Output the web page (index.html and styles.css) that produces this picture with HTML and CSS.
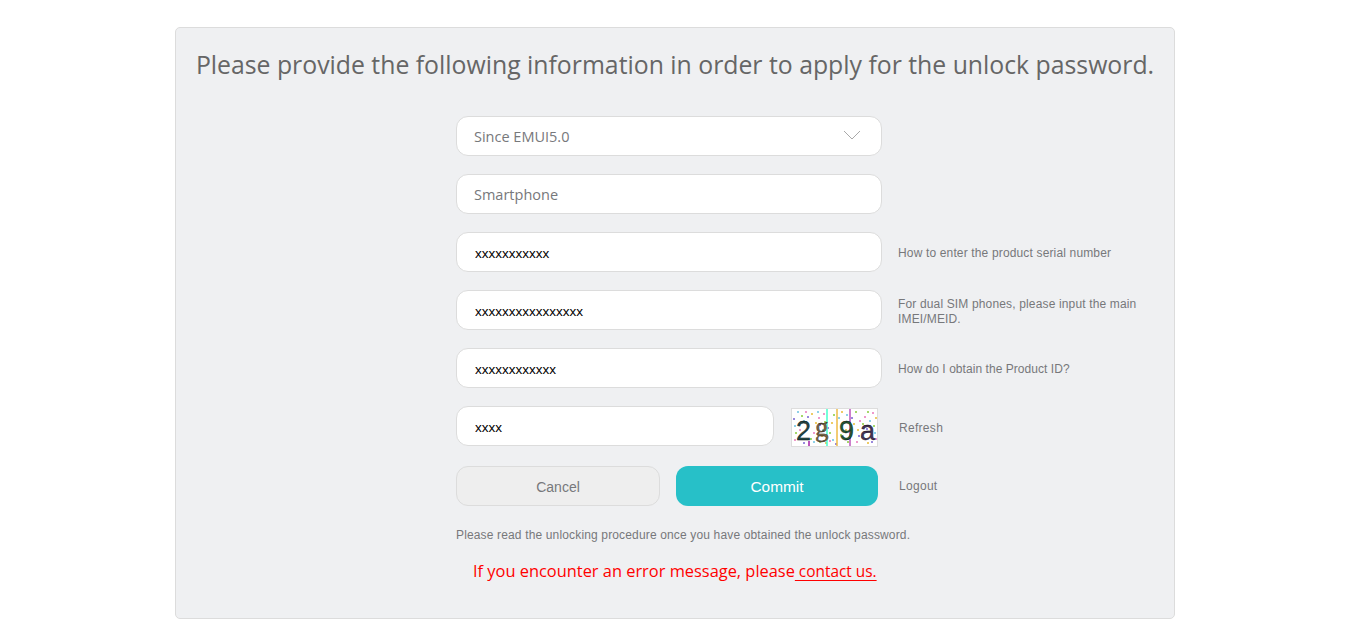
FILE: index.html
```html
<!DOCTYPE html>
<html lang="en">
<head>
  <meta charset="UTF-8" />
  <title>Apply for the unlock password</title>
  <link rel="stylesheet" href="styles.css">
</head>
<body>
  <div class="container">
    <h2>Please provide the following information in order to apply for the unlock password.</h2>

    <form class="unlock-form">
      <div class="row">
        <div class="field select">
          <span>Since EMUI5.0</span>
          <svg class="arrow" width="18" height="10" viewBox="0 0 18 10"><path d="M1 1l8 8 8-8" fill="none" stroke="#a9a9a9" stroke-width="1"/></svg>
        </div>
      </div>
      <div class="row">
        <input class="field soft" type="text" value="Smartphone" />
      </div>
      <div class="row">
        <input class="field" type="text" value="xxxxxxxxxxx" />
        <a class="hint">How to enter the product serial number</a>
      </div>
      <div class="row">
        <input class="field" type="text" value="xxxxxxxxxxxxxxxx" />
        <a class="hint two-line">For dual SIM phones, please input the main IMEI/MEID.</a>
      </div>
      <div class="row">
        <input class="field" type="text" value="xxxxxxxxxxxx" />
        <a class="hint short">How do I obtain the Product ID?</a>
      </div>
      <div class="row">
        <input class="field code" type="text" value="xxxx" />
        <svg class="captcha" width="87" height="39" viewBox="0 0 87 39">
          <rect x="0.5" y="0.5" width="86" height="38" fill="#fff" stroke="#ddd"/>
          <path fill="#8fd0e8" d="M6 3h2v2h-2zM26 3h2v2h-2zM47 9h2v2h-2zM70 28h2v2h-2zM22 33h2v2h-2zM3 17h2v2h-2zM55 6h2v2h-2zM78 12h2v2h-2zM12 12h2v2h-2zM41 31h2v2h-2zM31 21h2v2h-2zM58 29h2v2h-2zM83 24h2v2h-2zM9 26h2v2h-2z"/>
          <path fill="#ee99cc" d="M14 3h2v2h-2zM27 9h2v2h-2zM38 32h2v2h-2zM73 8h2v2h-2zM81 4h2v2h-2zM17 33h2v2h-2zM8 21h2v2h-2zM52 14h2v2h-2zM65 33h2v2h-2zM32 5h2v2h-2zM84 30h2v2h-2zM22 24h2v2h-2zM68 12h2v2h-2zM3 31h2v2h-2z"/>
          <path fill="#a6d86a" d="M4 24h2v2h-2zM33 13h2v2h-2zM64 3h2v2h-2zM56 33h2v2h-2zM82 17h2v2h-2zM19 30h2v2h-2zM42 6h2v2h-2zM71 15h2v2h-2zM10 7h2v2h-2zM49 26h2v2h-2zM28 33h2v2h-2zM76 3h2v2h-2zM38 24h2v2h-2z"/>
          <path fill="#eecc66" d="M20 5h2v2h-2zM30 27h2v2h-2zM62 15h2v2h-2zM76 34h2v2h-2zM6 30h2v2h-2zM40 14h2v2h-2zM84 9h2v2h-2zM24 14h2v2h-2zM54 21h2v2h-2zM34 34h2v2h-2zM66 21h2v2h-2zM50 3h2v2h-2z"/>
          <path fill="#9988dd" d="M16 8h2v2h-2zM36 19h2v2h-2zM60 9h2v2h-2zM75 20h2v2h-2zM12 34h2v2h-2zM44 35h2v2h-2zM2 10h2v2h-2zM67 27h2v2h-2zM28 16h2v2h-2zM80 33h2v2h-2z"/>
          <path d="M18 33v5" stroke="#b5b" stroke-width="2"/>
          <path d="M36 1v37" stroke="#4fc" stroke-width="1.5"/>
          <path d="M46 1v37" stroke="#eb4" stroke-width="1.5"/>
          <path d="M59 1v37" stroke="#b5b" stroke-width="1.5"/>
          <text class="glyph" x="5" y="32" fill="#244">2</text>
          <text class="glyph serif" x="24" y="28" fill="#764">g</text>
          <text class="glyph" x="48" y="32" fill="#253">9</text>
          <text class="glyph" x="69" y="32" fill="#435">a</text>
        </svg>
        <a class="link refresh">Refresh</a>
      </div>
      <div class="row actions">
        <button class="btn cancel" type="button">Cancel</button>
        <button class="btn commit" type="button">Commit</button>
        <a class="link logout">Logout</a>
      </div>
      <p class="note">Please read the unlocking procedure once you have obtained the unlock password.</p>
      <p class="error">If you encounter an error message, please<a> contact us.</a></p>
    </form>
  </div>
</body>
</html>
```

FILE: styles.css
```css
body {
  margin: 0;
  padding: 0;
  background: #fff;
  font-family: 'Liberation Sans', Arial, sans-serif;
}

.container {
  box-sizing: border-box;
  width: 1000px;
  height: 592px;
  margin: 27px 0 0 175px;
  background-color: #eff0f2;
  border: 1px solid #dcdcdc;
  border-radius: 5px;
}

h2 {
  margin: 0;
  padding-top: 19px;
  height: 88px;
  box-sizing: border-box;
  text-align: center;
  font-family: 'Open Sans', sans-serif;
  font-size: 24.8px;
  line-height: 34px;
  font-weight: 400;
  color: #666;
  white-space: nowrap;
}

.unlock-form {
  padding-left: 280px;
}

.row {
  display: flex;
  align-items: center;
  height: 40px;
  margin-bottom: 18px;
}

.field {
  box-sizing: border-box;
  width: 426px;
  height: 40px;
  flex: none;
  padding: 2px 17px 0 18px;
  background: #fff;
  border: 1px solid #dcdcdc;
  border-radius: 12px;
  font-family: 'Liberation Sans', Arial, sans-serif;
  font-size: 13.5px;
  color: #000;
  outline: none;
}

.select {
  display: flex;
  align-items: center;
  justify-content: space-between;
  padding: 0 20px 0 17px;
  font-family: 'Open Sans', sans-serif;
  font-size: 14.5px;
  color: #77787b;
}

.soft {
  padding: 0 17px;
  font-family: 'Open Sans', sans-serif;
  font-size: 14.5px;
  color: #77787b;
}

.code {
  width: 318px;
}

.arrow {
  margin-top: -2px;
}

.hint {
  margin: 2px 0 0 16px;
  font-size: 12px;
  line-height: 15px;
  letter-spacing: 0.15px;
  color: #77787b;
}

.two-line {
  margin-top: 4px;
}

.short {
  letter-spacing: 0.05px;
}

.captcha {
  margin: 3px 0 0 17px;
  flex: none;
}

.glyph {
  font-family: 'Liberation Sans', sans-serif;
  font-size: 27px;
  stroke: currentColor;
  stroke-width: 0.3px;
}

.serif {
  font-family: 'Liberation Serif', serif;
}

.link {
  font-size: 12px;
  letter-spacing: 0.3px;
  color: #77787b;
}

.refresh {
  margin: 4px 0 0 21px;
}

.actions {
  margin-top: 20px;
  margin-bottom: 0;
}

.btn {
  height: 40px;
  border-radius: 12px;
  font-family: 'Liberation Sans', Arial, sans-serif;
  font-size: 14px;
  cursor: pointer;
}

.cancel {
  width: 204px;
  padding-top: 2px;
  background-color: #eee;
  border: 1px solid #dcdcdc;
  color: #77787b;
}

.commit {
  width: 202px;
  margin-left: 16px;
  padding-top: 2px;
  background-color: #27c0c8;
  border: none;
  color: #fff;
  font-size: 15.4px;
}

.logout {
  margin-left: 21px;
}

.note {
  margin: 22px 0 0;
  font-size: 12px;
  line-height: 14px;
  letter-spacing: 0.15px;
  color: #77787b;
}

.error {
  margin: 18px 0 0 17px;
  font-family: 'Open Sans', sans-serif;
  font-size: 16.4px;
  line-height: 22px;
  color: #f00;
}

.error a {
  font-size: 15.4px;
  text-decoration: underline;
  text-underline-offset: 3px;
}
```
